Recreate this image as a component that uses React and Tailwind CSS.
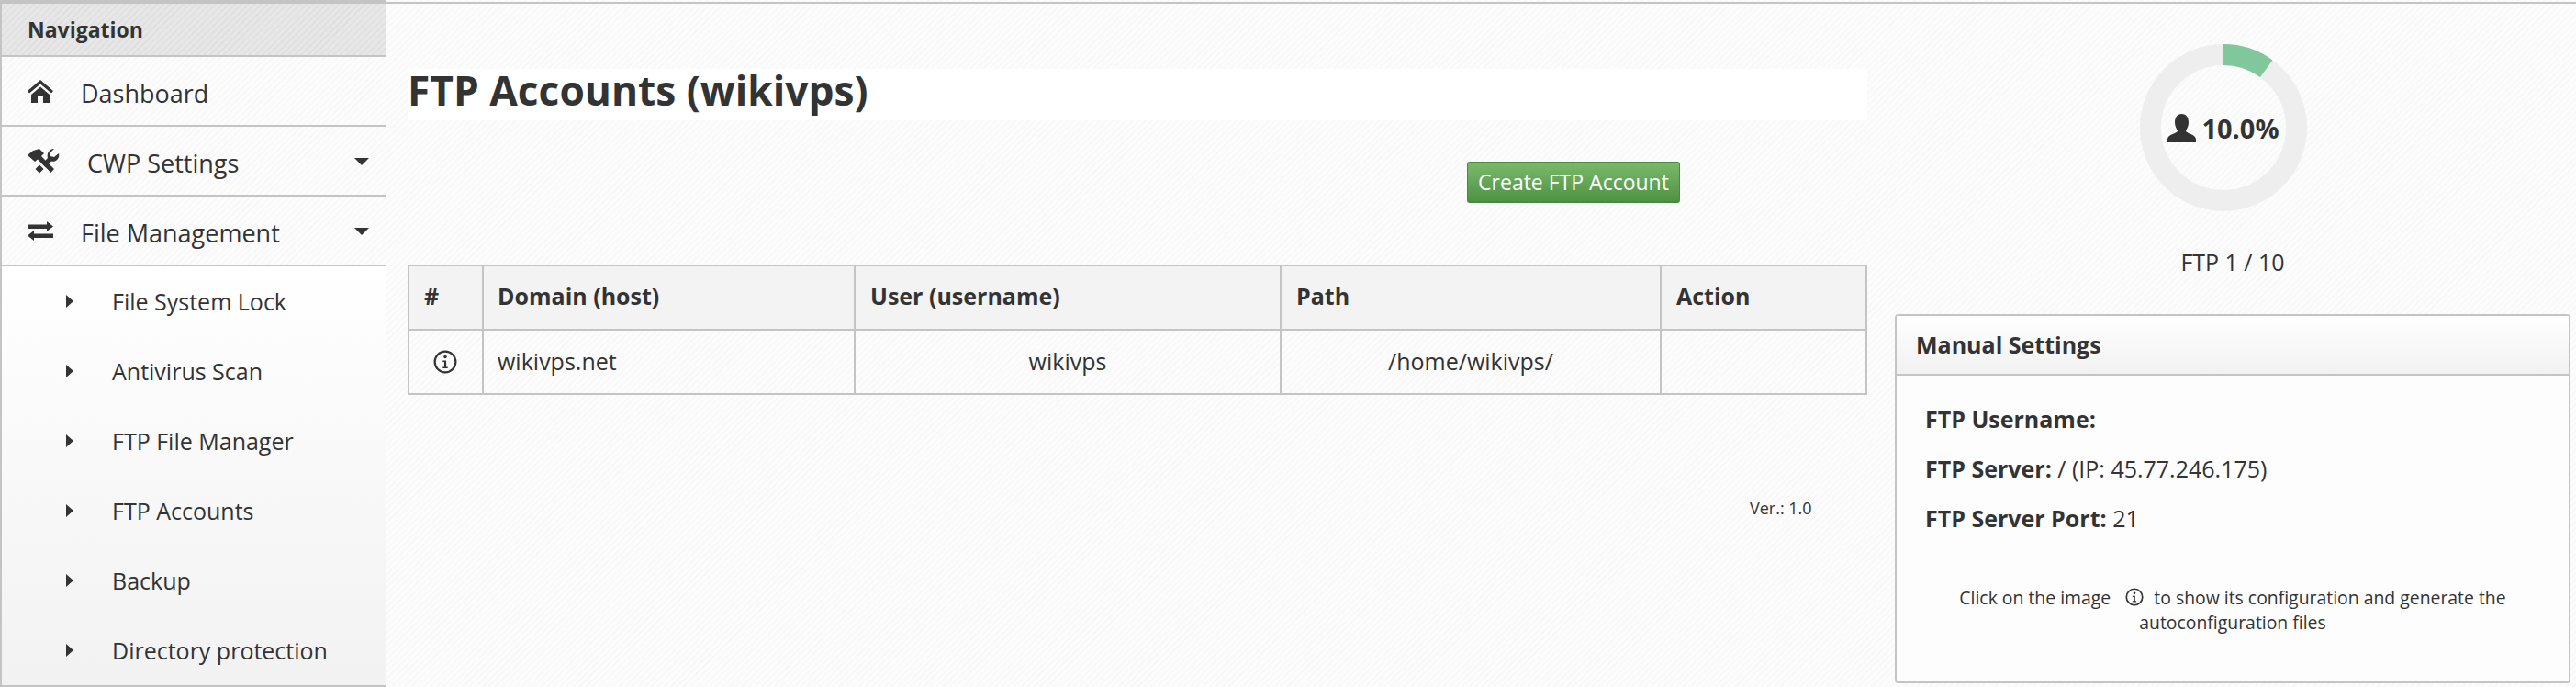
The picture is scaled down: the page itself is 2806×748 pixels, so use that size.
const subItems = ['File System Lock', 'Antivirus Scan', 'FTP File Manager', 'FTP Accounts', 'Backup', 'Directory protection'];

const paper = 'bg-[#fbfbfb] bg-[repeating-linear-gradient(135deg,#f6f6f6_0px,#fdfdfd_2px,#fafafa_5px)]';

const HomeIcon = () => (
    <svg viewBox="0 0 28 25" className="w-[28px] h-[25px]" fill="#333">
        <path d="M14 0 L28 12 L26 14.5 L14 4.5 L2 14.5 L0 12 Z" />
        <path d="M14 7.5 L24 16 V25 H17 V18 H11 V25 H4 V16 Z" />
    </svg>
);

const ToolsIcon = () => (
    <svg viewBox="0 0 35 27" className="w-[35px] h-[27px]" fill="#333">
        <path d="M0 7 L6 2 L13 0 L18 5 L15 8 L29 22 L25.5 26 L11 11.5 L8 14 Z" />
        <path d="M29 0 L25 4 L25 8 L29 9 L34 5 C35.5 10 31 15 26 13.5 L19.5 20 L16 16.5 L22 10 C20.5 5 24 0 29 0 Z" />
        <path d="M13 17.5 L17.5 22 L13 26.5 L8.5 22 Z" />
    </svg>
);

const SwapIcon = () => (
    <svg viewBox="0 0 28 21" className="w-[28px] h-[21px]" fill="#333">
        <path d="M21 0 L28 5.5 L21 11 V8 H0 V3.5 H21 Z" />
        <path d="M7 10 L0 15.5 L7 21 V18 H28 V13.5 H7 Z" />
    </svg>
);

const InfoIcon = ({ className }) => (
    <svg viewBox="0 0 24 24" className={className} fill="none" stroke="#333">
        <circle cx="12" cy="12" r="10.5" strokeWidth="2" />
        <circle cx="12" cy="7" r="1.6" fill="#333" stroke="none" />
        <path d="M9.5 10.5 H13 V17 H14.5 V18.5 H9.5 V17 H11 V12 H9.5 Z" fill="#333" stroke="none" />
    </svg>
);

const UserIcon = () => (
    <svg viewBox="0 0 31 31" className="w-[31px] h-[31px] shrink-0" fill="#333">
        <path d="M15.5 0 C20.5 0 23 4 23 9.5 C23 13.5 21 16.5 20 18.5 C20 21 31 22.5 31 27.5 V31 H0 V27.5 C0 22.5 11 21 11 18.5 C10 16.5 8 13.5 8 9.5 C8 4 10.5 0 15.5 0 Z" />
    </svg>
);

const NavRow = ({ icon, label, caret, labelClass }) => (
    <div className="relative h-[76px] border-b-2 border-[#c4c4c4] flex items-center pl-7">
        <span className="w-[58px] flex items-center shrink-0">{icon}</span>
        <span className={`pt-[7px] text-[27px] text-[#333] ${labelClass || ''}`}>{label}</span>
        {caret && <span className="absolute right-[18px] top-[34px] border-x-8 border-t-8 border-x-transparent border-t-[#333]" />}
    </div>
);

const Sidebar = () => (
    <aside className={`w-[420px] shrink-0 h-[748px] border-l-2 border-t-4 border-[#c4c4c4] ${paper} flex flex-col`}>
        <div className="h-[58px] bg-[repeating-linear-gradient(135deg,#dcdcdc_0px,#e9e9e9_2px,#e2e2e2_5px)] border-b-2 border-[#c4c4c4] flex items-center pl-7 font-bold text-[23px] text-[#333]">
            Navigation
        </div>
        <NavRow icon={<HomeIcon />} label="Dashboard" />
        <NavRow icon={<ToolsIcon />} label="CWP Settings" labelClass="ml-[7px]" caret />
        <NavRow icon={<SwapIcon />} label="File Management" caret />
        <div className="flex-1 border-b-2 border-[#c4c4c4] bg-gradient-to-b from-[#ffffff] to-[#f2f2f2] flex flex-col">
            {subItems.map((item) => (
                <div key={item} className="h-[76px] flex items-center pl-[70px] text-[25px] text-[#333]">
                    <span className="w-[50px] shrink-0 flex">
                        <span className="border-y-[7px] border-l-[8px] border-y-transparent border-l-[#333]" />
                    </span>
                    <span className="pt-[2px]">{item}</span>
                </div>
            ))}
        </div>
    </aside>
);

const FtpTable = () => (
    <table className="w-[1590px] ml-[2px] border-collapse border-2 border-[#c4c4c4] text-[25px] text-[#333] table-fixed">
        <thead className="bg-[#f3f3f3]">
            <tr className="h-[70px] font-bold text-left">
                <th className="w-[81px] border-2 border-[#c4c4c4] pl-4 pb-[2px]">#</th>
                <th className="w-[405px] border-2 border-[#c4c4c4] pl-[15px] pb-[2px]">Domain (host)</th>
                <th className="w-[464px] border-2 border-[#c4c4c4] pl-4 pb-[2px]">User (username)</th>
                <th className="w-[414px] border-2 border-[#c4c4c4] pl-4 pb-[2px]">Path</th>
                <th className="border-2 border-[#c4c4c4] pl-4 pb-[2px]">Action</th>
            </tr>
        </thead>
        <tbody>
            <tr className="h-[70px]">
                <td className="border-2 border-[#c4c4c4]"><InfoIcon className="w-[26px] h-[26px] mx-auto -translate-x-[1px]" /></td>
                <td className="border-2 border-[#c4c4c4] pl-[15px]">wikivps.net</td>
                <td className="border-2 border-[#c4c4c4] text-center">wikivps</td>
                <td className="border-2 border-[#c4c4c4] text-center">/home/wikivps/</td>
                <td className="border-2 border-[#c4c4c4]"></td>
            </tr>
        </tbody>
    </table>
);

const Donut = () => (
    <div className="relative w-[182px] h-[182px]">
        <svg viewBox="0 0 182 182" className="w-[182px] h-[182px]">
            <circle cx="91" cy="91" r="79.5" fill="none" stroke="#eeeeee" strokeWidth="23" />
            <path d="M91 0 A91 91 0 0 1 144.5 17.4 L131 36 A68 68 0 0 0 91 23 Z" fill="#80c79c" />
        </svg>
        <div className="absolute inset-0 flex items-center justify-center gap-[6px] pt-[1px] text-[29px] font-bold text-[#333]">
            <UserIcon />
            <span>10.0%</span>
        </div>
    </div>
);

const ManualSettings = () => (
    <div className="w-[736px] h-[402px] ml-[24px] border-2 border-[#c4c4c4] rounded-[4px] bg-[#fdfdfd] flex flex-col">
        <div className="h-[65px] shrink-0 border-b-2 border-[#c4c4c4] bg-gradient-to-b from-[#ffffff] to-[#f1f1f1] flex items-center pl-[21px] font-bold text-[25px] text-[#333]">
            Manual Settings
        </div>
        <div className="pl-[31px] pt-[30px] text-[25px] text-[#333] flex flex-col gap-[20px] leading-[34px]">
            <div><b>FTP Username:</b></div>
            <div><b>FTP Server:</b> / (IP: 45.77.246.175)</div>
            <div><b>FTP Server Port:</b> 21</div>
        </div>
        <div className="mt-[56px] px-[50px] text-center text-[19.4px] leading-[27px] text-[#333]">
            Click on the image <InfoIcon className="inline-block w-[20px] h-[20px] ml-[11px] mr-[6px] align-[-2px]" /> to show its configuration and generate the autoconfiguration files
        </div>
    </div>
);

export default function App() {
    return (
        <div className={`w-[2806px] h-[748px] flex overflow-hidden ${paper}`} style={{ fontFamily: '"Open Sans", "Noto Sans", sans-serif' }}>
            <Sidebar />
            <main className="flex-1 border-t-2 border-[#c4c4c4] mt-[2px] flex">
                <div className="w-[1620px] pl-[22px] shrink-0">
                    <h1 className="mt-[71px] h-[56px] w-[1590px] ml-[2px] pb-[10px] bg-white flex items-center text-[44.3px] font-bold text-[#333]">
                        FTP Accounts (wikivps)
                    </h1>
                    <div className="mt-[45px] ml-[1156px] w-[232px] h-[45px] rounded-[3px] border border-[#4a8a3e] border-b-2 bg-gradient-to-b from-[#7ab96a] to-[#4f9345] flex items-center justify-center text-white text-[23px] whitespace-nowrap">
                        Create FTP Account
                    </div>
                    <div className="mt-[67px]"><FtpTable /></div>
                    <div className="mt-[109px] ml-[1464px] text-[18px] text-[#333] leading-[28px]">Ver.: 1.0</div>
                </div>
                <div className="flex-1 flex flex-col">
                    <div className="mt-[44px] ml-[291px]"><Donut /></div>
                    <div className="mt-[38px] text-center text-[25px] text-[#333] ml-[24px] w-[736px] leading-[34px]">FTP 1 / 10</div>
                    <div className="mt-[40px]"><ManualSettings /></div>
                </div>
            </main>
        </div>
    );
}
